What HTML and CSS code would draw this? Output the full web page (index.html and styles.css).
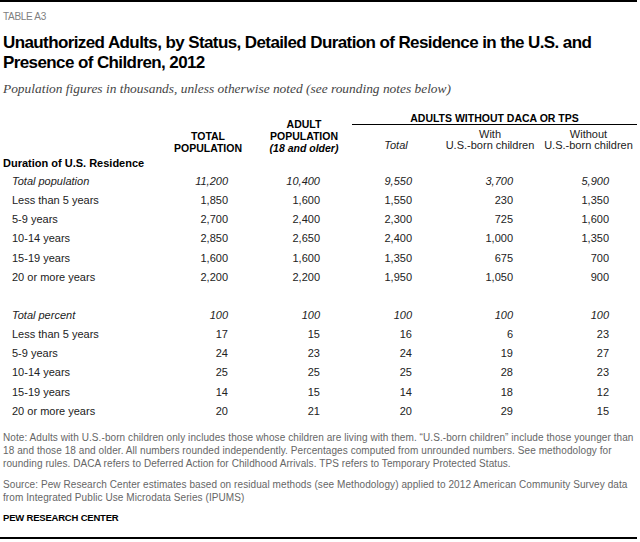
FILE: index.html
```html
<!DOCTYPE html>
<html>
<head>
<meta charset="utf-8">
<link rel="stylesheet" href="styles.css">
</head>
<body>
<div class="page">
  <div class="label">TABLE A3</div>
  <h1 class="title">Unauthorized Adults, by Status, Detailed Duration of Residence in the U.S. and Presence of Children, 2012</h1>
  <p class="subtitle">Population figures in thousands, unless otherwise noted (see rounding notes below)</p>
  <table class="data">
    <colgroup>
      <col class="c0"><col class="c1"><col class="c2"><col class="c3"><col class="c4"><col class="c5">
    </colgroup>
    <thead>
      <tr class="h1">
        <th rowspan="2"></th>
        <th rowspan="2" class="caps">TOTAL<br>POPULATION</th>
        <th rowspan="2" class="caps">ADULT<br>POPULATION<br><em>(18 and older)</em></th>
        <th colspan="3" class="caps group">ADULTS WITHOUT DACA OR TPS</th>
      </tr>
      <tr class="h2">
        <th class="sub"><em>Total</em></th>
        <th class="sub">With<br>U.S.-born children</th>
        <th class="sub">Without<br>U.S.-born children</th>
      </tr>
    </thead>
    <tbody>
      <tr class="section"><td colspan="6">Duration of U.S. Residence</td></tr>
      <tr class="it"><td>Total population</td><td>11,200</td><td>10,400</td><td>9,550</td><td>3,700</td><td>5,900</td></tr>
      <tr><td>Less than 5 years</td><td>1,850</td><td>1,600</td><td>1,550</td><td>230</td><td>1,350</td></tr>
      <tr><td>5-9 years</td><td>2,700</td><td>2,400</td><td>2,300</td><td>725</td><td>1,600</td></tr>
      <tr><td>10-14 years</td><td>2,850</td><td>2,650</td><td>2,400</td><td>1,000</td><td>1,350</td></tr>
      <tr><td>15-19 years</td><td>1,600</td><td>1,600</td><td>1,350</td><td>675</td><td>700</td></tr>
      <tr><td>20 or more years</td><td>2,200</td><td>2,200</td><td>1,950</td><td>1,050</td><td>900</td></tr>
      <tr class="blank"><td colspan="6"></td></tr>
      <tr class="it"><td>Total percent</td><td>100</td><td>100</td><td>100</td><td>100</td><td>100</td></tr>
      <tr><td>Less than 5 years</td><td>17</td><td>15</td><td>16</td><td>6</td><td>23</td></tr>
      <tr><td>5-9 years</td><td>24</td><td>23</td><td>24</td><td>19</td><td>27</td></tr>
      <tr><td>10-14 years</td><td>25</td><td>25</td><td>25</td><td>28</td><td>23</td></tr>
      <tr><td>15-19 years</td><td>14</td><td>15</td><td>14</td><td>18</td><td>12</td></tr>
      <tr><td>20 or more years</td><td>20</td><td>21</td><td>20</td><td>29</td><td>15</td></tr>
    </tbody>
  </table>
  <p class="note">Note: Adults with U.S.-born children only includes those whose children are living with them. “U.S.-born children” include those younger than 18 and those 18 and older. All numbers rounded independently. Percentages computed from unrounded numbers. See methodology for rounding rules. DACA refers to Deferred Action for Childhood Arrivals. TPS refers to Temporary Protected Status.</p>
  <p class="note source">Source: Pew Research Center estimates based on residual methods (see Methodology) applied to 2012 American Community Survey data from Integrated Public Use Microdata Series (IPUMS)</p>
  <p class="credit">PEW RESEARCH CENTER</p>
</div>
</body>
</html>
```

FILE: styles.css
```css
html, body {
  margin: 0;
  padding: 0;
  background: #fff;
}
.page {
  width: 637px;
  height: 539px;
  box-sizing: border-box;
  border-top: 2px solid #000;
  border-bottom: 2px solid #000;
  font-family: "Liberation Sans", Arial, sans-serif;
  color: #000;
  padding: 0 3px;
}
.label {
  margin-top: 9px;
  font-size: 10px;
  line-height: 12px;
  color: #808080;
  letter-spacing: -0.3px;
}
.title {
  margin: 10px 0 0;
  font-size: 17px;
  line-height: 20px;
  font-weight: bold;
  letter-spacing: -0.6px;
}
.subtitle {
  margin: 8px 0 0;
  font-family: "Liberation Serif", "DejaVu Serif", serif;
  font-style: italic;
  font-size: 13.4px;
  line-height: 16px;
  color: #444;
}
.data {
  margin-top: 15px;
  margin-left: -3px;
  border-collapse: collapse;
  table-layout: fixed;
  width: 637px;
  font-size: 11px;
}
.c0 { width: 160px; }
.c1 { width: 96px; }
.c2 { width: 96px; }
.c3 { width: 88px; }
.c4 { width: 100px; }
.c5 { width: 97px; }
.data th {
  padding: 0;
  font-weight: normal;
  text-align: center;
  vertical-align: bottom;
  line-height: 12px;
}
.data th.caps {
  font-weight: bold;
  font-size: 10.5px;
}
.data th.caps em {
  font-weight: bold;
}
.data th.group {
  border-bottom: 1px solid #000;
  padding-bottom: 0;
  vertical-align: top;
}
.data th.sub {
  padding-top: 4px;
  padding-bottom: 3px;
  line-height: 11px;
  color: #222;
}
.data td {
  padding: 0;
  height: 19.15px;
  line-height: 19px;
  text-align: right;
  color: #222;
}
.data td:nth-child(1) { text-align: left; padding-left: 12px; }
.data td:nth-child(2) { padding-right: 28px; }
.data td:nth-child(3) { padding-right: 32px; }
.data td:nth-child(4) { padding-right: 28px; }
.data td:nth-child(5) { padding-right: 27px; }
.data td:nth-child(6) { padding-right: 28px; }
.data tr.section td {
  padding-left: 3px;
  font-weight: bold;
  color: #000;
  height: 18px;
  line-height: 18px;
}
.data tr.it td { font-style: italic; }
.note {
  margin: 10px 0 0;
  font-size: 10px;
  letter-spacing: 0.08px;
  line-height: 13px;
  color: #666;
}
.note.source { margin-top: 8px; }
.credit {
  margin: 8px 0 0;
  font-size: 9.5px;
  font-weight: bold;
  letter-spacing: -0.2px;
  line-height: 12px;
  color: #000;
}
```
